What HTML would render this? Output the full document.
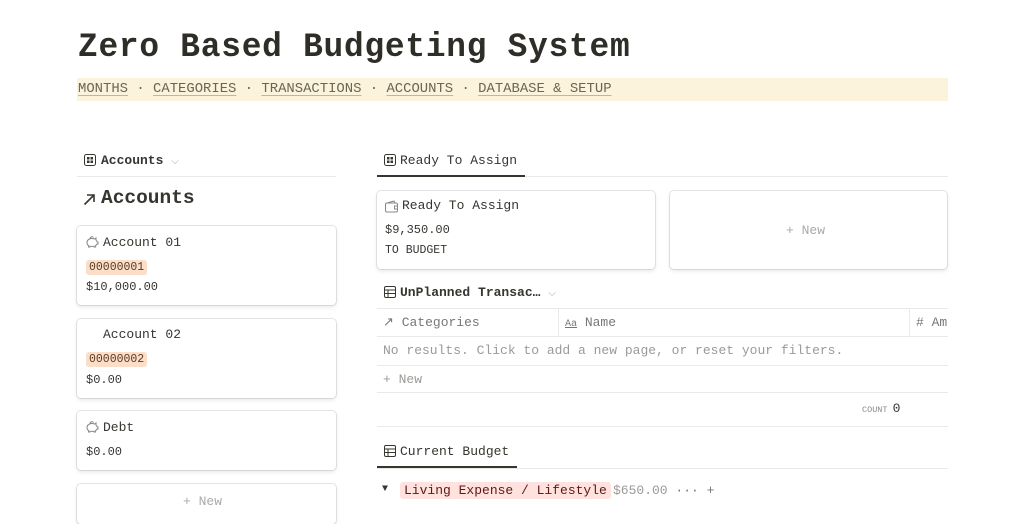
<!DOCTYPE html>
<html><head><meta charset="utf-8"><style>
*{margin:0;padding:0;box-sizing:border-box}
body{width:1024px;height:512px;overflow:hidden;background:#fff;font-family:"Liberation Mono",monospace;color:#37352f;position:relative}
.a{position:absolute;white-space:nowrap}
.card{position:absolute;border-radius:4px;box-shadow:0 0 0 1px rgba(15,15,15,.1),0 2px 4px rgba(15,15,15,.1);background:#fff}
.hl{position:absolute;height:1px;background:#e9e9e7}
.t13{font-size:13px}
.tag{background:#fadec9;color:#5a3a20;font-size:11.5px;padding:1px 3px;border-radius:3px}
.nav a{color:#6b6553;text-decoration:underline;text-decoration-color:#bcb6a4;text-underline-offset:3px}
</style></head><body>
<div class="a" style="left:78px;top:29px;font-size:34px;font-weight:bold;color:#2f2d28;letter-spacing:0.8px;transform:scaleX(0.965);transform-origin:left">Zero Based Budgeting System</div>
<div class="a nav" style="left:77px;top:78px;width:871px;height:23px;background:#fbf3db;font-size:13.9px;padding:3px 1px;color:#6b6553"><a>MONTHS</a> · <a>CATEGORIES</a> · <a>TRANSACTIONS</a> · <a>ACCOUNTS</a> · <a>DATABASE &amp; SETUP</a></div>

<svg width="0" height="0" style="position:absolute"><defs>
<symbol id="pig" viewBox="0 0 14 14"><path d="M2 7.5C2 5 4.3 3.5 7 3.5c1 0 2 .2 2.7.6L11 3v2c.7.6 1 1.3 1.2 2H13v2h-1c-.3.7-.8 1.2-1.4 1.6V12H9v-.8c-.6.2-1.3.2-2 .2s-1.3 0-2-.2V12H3.5v-1.3C2.6 10 2 8.8 2 7.5z" fill="none" stroke="#888" stroke-width="1"/><path d="M5 3.5a2 2 0 0 1 3.5-1" fill="none" stroke="#888"/></symbol>
</defs></svg>

<!-- left column -->
<svg class="a" style="left:84px;top:154px" width="12" height="12" viewBox="0 0 12 12"><rect x="0.5" y="0.5" width="11" height="11" rx="2" fill="none" stroke="#37352f"/><rect x="3" y="3" width="2.5" height="2.5" fill="#37352f"/><rect x="6.5" y="3" width="2.5" height="2.5" fill="#37352f"/><rect x="3" y="6.5" width="2.5" height="2.5" fill="#37352f"/><rect x="6.5" y="6.5" width="2.5" height="2.5" fill="#37352f"/></svg>
<div class="a" style="left:101px;top:153px;font-size:13px;font-weight:bold">Accounts <span style="color:#aaa;font-weight:normal;font-size:10px">⌵</span></div>
<div class="hl" style="left:77px;top:176px;width:259px"></div>
<svg class="a" style="left:83px;top:193px" width="13" height="13" viewBox="0 0 13 13" fill="none" stroke="#37352f" stroke-width="1.6"><path d="M1.5 11.5L11 2M4 2h7v7"/></svg>
<div class="a" style="left:101px;top:187px;font-size:19.5px;font-weight:bold">Accounts</div>

<div class="card" style="left:77px;top:226px;width:259px;height:79px"></div>
<svg class="a" style="left:85px;top:235px" width="14" height="14"><use href="#pig"/></svg>
<div class="a t13" style="left:103px;top:235px">Account 01</div>
<div class="a tag" style="left:86px;top:260px">00000001</div>
<div class="a" style="left:86px;top:280px;font-size:12px">$10,000.00</div>

<div class="card" style="left:77px;top:319px;width:259px;height:79px"></div>
<div class="a t13" style="left:103px;top:327px">Account 02</div>
<div class="a tag" style="left:86px;top:352px">00000002</div>
<div class="a" style="left:86px;top:373px;font-size:12px">$0.00</div>

<div class="card" style="left:77px;top:411px;width:259px;height:59px"></div>
<svg class="a" style="left:85px;top:420px" width="14" height="14"><use href="#pig"/></svg>
<div class="a t13" style="left:103px;top:420px">Debt</div>
<div class="a" style="left:86px;top:445px;font-size:12px">$0.00</div>

<div class="card" style="left:77px;top:484px;width:259px;height:40px"></div>
<div class="a t13" style="left:183px;top:494px;color:#aaa">+ New</div>

<!-- right column -->
<svg class="a" style="left:384px;top:154px" width="12" height="12" viewBox="0 0 12 12"><rect x="0.5" y="0.5" width="11" height="11" rx="2" fill="none" stroke="#37352f"/><rect x="3" y="3" width="2.5" height="2.5" fill="#37352f"/><rect x="6.5" y="3" width="2.5" height="2.5" fill="#37352f"/><rect x="3" y="6.5" width="2.5" height="2.5" fill="#37352f"/><rect x="6.5" y="6.5" width="2.5" height="2.5" fill="#37352f"/></svg>
<div class="a t13" style="left:400px;top:153px">Ready To Assign</div>
<div class="hl" style="left:377px;top:176px;width:571px"></div>
<div class="a" style="left:377px;top:175px;width:148px;height:2px;background:#37352f"></div>

<div class="card" style="left:377px;top:191px;width:278px;height:78px"></div>
<svg class="a" style="left:385px;top:200px" width="13" height="13" viewBox="0 0 13 13" fill="none" stroke="#888"><rect x="0.5" y="3" width="12" height="9" rx="1.5"/><path d="M2 3L9 1l1 2M12.5 6h-3v3h3"/></svg>
<div class="a t13" style="left:402px;top:198px">Ready To Assign</div>
<div class="a" style="left:385px;top:223px;font-size:12px">$9,350.00</div>
<div class="a" style="left:385px;top:244px;font-size:11.5px">TO BUDGET</div>

<div class="card" style="left:670px;top:191px;width:277px;height:78px"></div>
<div class="a t13" style="left:786px;top:223px;color:#aaa">+ New</div>

<svg class="a" style="left:384px;top:286px" width="12" height="12" viewBox="0 0 12 12" fill="none" stroke="#37352f"><rect x="0.5" y="0.5" width="11" height="11" rx="1.5"/><path d="M0.5 4h11M0.5 7.5h11M4 4v7.5"/></svg>
<div class="a" style="left:400px;top:285px;font-size:13px;font-weight:bold">UnPlanned Transac… <span style="color:#aaa;font-weight:normal;font-size:10px">⌵</span></div>
<div class="hl" style="left:377px;top:308px;width:571px"></div>
<div class="a t13" style="left:383px;top:315px;color:#787774">↗ Categories</div>
<div class="a" style="left:558px;top:309px;width:1px;height:27px;background:#e9e9e7"></div>
<div class="a t13" style="left:565px;top:315px;color:#787774"><span style="font-size:10px;text-decoration:underline">Aa</span> Name</div>
<div class="a" style="left:909px;top:309px;width:1px;height:27px;background:#e9e9e7"></div>
<div class="a t13" style="left:916px;top:315px;color:#787774"># Am</div>
<div class="hl" style="left:377px;top:336px;width:571px"></div>
<div class="a t13" style="left:383px;top:343px;color:#9b9a97">No results. Click to add a new page, or reset your filters.</div>
<div class="hl" style="left:377px;top:365px;width:571px"></div>
<div class="a t13" style="left:383px;top:372px;color:#9b9a97">+ New</div>
<div class="hl" style="left:377px;top:392px;width:571px"></div>
<div class="a" style="left:862px;top:401px;font-size:8.5px;color:#888">COUNT <span style="font-size:13px;color:#37352f">0</span></div>
<div class="hl" style="left:377px;top:426px;width:571px"></div>

<svg class="a" style="left:384px;top:445px" width="12" height="12" viewBox="0 0 12 12" fill="none" stroke="#37352f"><rect x="0.5" y="0.5" width="11" height="11" rx="1.5"/><path d="M0.5 4h11M0.5 7.5h11M4 4v7.5"/></svg>
<div class="a t13" style="left:400px;top:444px">Current Budget</div>
<div class="hl" style="left:377px;top:468px;width:571px"></div>
<div class="a" style="left:377px;top:466px;width:140px;height:2px;background:#37352f"></div>
<div class="a" style="left:382px;top:484px;font-size:10px">▼</div>
<div class="a t13" style="left:400px;top:482px;background:#ffe2dd;color:#5d1715;padding:1px 4px;border-radius:3px">Living Expense / Lifestyle</div>
<div class="a t13" style="left:613px;top:483px;color:#9b9a97">$650.00 <span style="color:#777">··· +</span></div>
</body></html>
